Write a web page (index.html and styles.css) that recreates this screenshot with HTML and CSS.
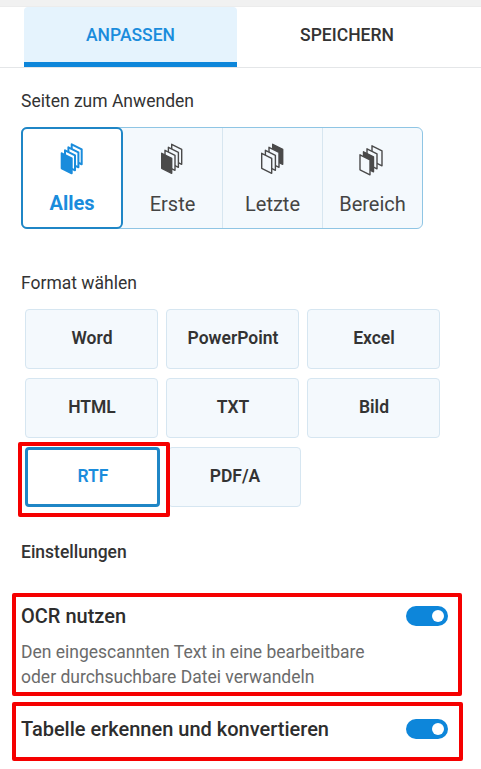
FILE: index.html
```html
<!DOCTYPE html>
<html lang="de">
<head>
    <meta charset="UTF-8">
    <meta name="viewport" content="width=device-width, initial-scale=1.0">
    <title>Anpassen</title>
    <link rel="stylesheet" href="styles.css">
</head>
<body>
    <div class="topstrip"></div>

    <div class="tabs">
        <div class="tab active">ANPASSEN</div>
        <div class="tab">SPEICHERN</div>
    </div>

    <div class="label pages-label">Seiten zum Anwenden</div>
    <div class="segments">
        <div class="segment active">
            <svg class="pages" viewBox="0 0 36 38" width="36" height="38">
                <path class="page-blue" transform="translate(11 -9)" d="M6.700 13.300l10 5v15l-10-5z"/>
                <path class="page-blue" transform="translate(7.700 -6)" d="M6.700 13.300l10 5v15l-10-5z"/>
                <path class="page-blue" transform="translate(4.300 -3)" d="M6.700 13.300l10 5v15l-10-5z"/>
                <path class="page-blue solid" transform="translate(1 0)" d="M6.700 13.300l10 5v15l-10-5z"/>
            </svg>
            <span>Alles</span>
        </div>
        <div class="segment">
            <svg class="pages" viewBox="0 0 36 38" width="36" height="38">
                <path class="page" transform="translate(10 -9)" d="M6.700 13.300l10 5v15l-10-5z"/>
                <path class="page" transform="translate(6.700 -6)" d="M6.700 13.300l10 5v15l-10-5z"/>
                <path class="page" transform="translate(3.300 -3)" d="M6.700 13.300l10 5v15l-10-5z"/>
                <path class="page solid" d="M6.700 13.300l10 5v15l-10-5z"/>
            </svg>
            <span>Erste</span>
        </div>
        <div class="segment">
            <svg class="pages" viewBox="0 0 36 38" width="36" height="38">
                <path class="page solid" transform="translate(11 -9)" d="M6.700 13.300l10 5v15l-10-5z"/>
                <path class="page" transform="translate(7.300 -6)" d="M6.700 13.300l10 5v15l-10-5z"/>
                <path class="page" transform="translate(3.700 -3)" d="M6.700 13.300l10 5v15l-10-5z"/>
                <path class="page" d="M6.700 13.300l10 5v15l-10-5z"/>
            </svg>
            <span>Letzte</span>
        </div>
        <div class="segment">
            <svg class="pages" viewBox="0 0 36 38" width="36" height="38">
                <path class="page" transform="translate(10.300 -7.500)" d="M6.700 13.300l10 5v15l-10-5z"/>
                <path class="page" transform="translate(5.300 -4.500)" d="M6.700 13.300l10 5v15l-10-5z"/>
                <path class="page solid" transform="translate(1.800 -1.500)" d="M6.700 13.300l10 5v15l-10-5z"/>
                <path class="page" transform="translate(-1.700 1.500)" d="M6.700 13.300l10 5v15l-10-5z"/>
            </svg>
            <span>Bereich</span>
        </div>
    </div>

    <div class="label format-label">Format wählen</div>
    <div class="formats">
        <div class="format">Word</div>
        <div class="format">PowerPoint</div>
        <div class="format">Excel</div>
        <div class="format">HTML</div>
        <div class="format">TXT</div>
        <div class="format">Bild</div>
        <div class="format active">RTF</div>
        <div class="format wide">PDF/A</div>
    </div>

    <div class="label settings-label">Einstellungen</div>

    <div class="option ocr">
        <div class="option-head">
            <span class="option-title">OCR nutzen</span>
            <span class="switch"></span>
        </div>
        <p class="option-text">Den eingescannten Text in eine bearbeitbare<br>oder durchsuchbare Datei verwandeln</p>
    </div>
    <div class="option table">
        <div class="option-head">
            <span class="option-title">Tabelle erkennen und konvertieren</span>
            <span class="switch"></span>
        </div>
    </div>

    <!-- rote Markierungen -->
    <div class="mark mark-rtf"></div>
    <div class="mark mark-ocr"></div>
    <div class="mark mark-table"></div>
</body>
</html>
```

FILE: styles.css
```css
html,
body {
    height: 100%;
}

body {
    font-family: Roboto, "Liberation Sans", sans-serif;
    margin: 0;
    padding: 0;
    position: relative;
    overflow: hidden;
    background-color: #fff;
    color: #333;
}

.topstrip {
    height: 6px;
    background-color: #f1f1f1;
    border-bottom: 1px solid #ececec;
}

.tabs {
    display: flex;
    height: 60px;
    padding-left: 24px;
    border-bottom: 1px solid #e4e6e8;
}

.tab {
    width: 220px;
    height: 55px;
    display: flex;
    align-items: center;
    justify-content: center;
    font-size: 17.5px;
    font-weight: 500;
    color: #333;
}

.tab.active {
    width: 213px;
    background-color: #e5f3fd;
    border-bottom: 5px solid #0d86da;
    border-radius: 4px 4px 0 0;
    color: #1a8cdc;
}

.label {
    font-size: 17.5px;
    line-height: 20px;
    padding-left: 21px;
    color: #333;
}

.pages-label {
    margin-top: 23px;
}

.segments {
    display: flex;
    width: 402px;
    height: 102px;
    margin: 16px 0 0 21px;
    box-sizing: border-box;
    background-color: #f4f9fd;
    border: 1px solid #8fc5e4;
    border-radius: 6px;
}

.segment {
    flex: 1;
    display: flex;
    flex-direction: column;
    align-items: center;
    border-left: 1px solid #d7e6f0;
    font-size: 20px;
    color: #444;
}

.segment .pages {
    margin-top: 12px;
}

.segment span {
    margin-top: 14px;
    line-height: 24px;
}

.segment.active {
    flex: none;
    width: 102px;
    height: 102px;
    margin: -1px 0 -1px -1px;
    box-sizing: border-box;
    background-color: #fff;
    border: 2px solid #1f86c6;
    border-radius: 6px;
    font-weight: 700;
    color: #1a8cdc;
}

.segment.active + .segment {
    border-left: 0;
}

.segment.active .pages {
    margin-top: 11px;
}

.segment.active span {
    margin-top: 13px;
}

.page {
    fill: #f4f9fd;
    stroke: #4a4a4a;
    stroke-width: 1.4;
    stroke-linejoin: round;
}

.page.solid {
    fill: #4a4a4a;
}

.page-blue {
    fill: #fff;
    stroke: #1a8cdc;
    stroke-width: 2;
    stroke-linejoin: round;
}

.page-blue.solid {
    fill: #1a8cdc;
}

.format-label {
    margin-top: 44px;
}

.formats {
    display: grid;
    grid-template-columns: repeat(3, 133px);
    grid-auto-rows: 60px;
    gap: 9px 8px;
    margin: 16px 0 0 25px;
}

.format {
    display: flex;
    align-items: center;
    justify-content: center;
    box-sizing: border-box;
    padding: 0 0 2px 1px;
    background-color: #f4f9fd;
    border: 1px solid #d6e6f1;
    border-radius: 4px;
    font-size: 17.5px;
    font-weight: 600;
    color: #333;
}

.format.active {
    width: 135px;
    background-color: #fff;
    border: 3px solid #1f86c6;
    color: #1a8cdc;
}

.format.wide {
    width: 133px;
    margin-left: 2px;
}

.settings-label {
    margin-top: 35px;
    font-weight: 500;
}

.option {
    padding: 0 33px 0 21px;
}

.ocr {
    margin-top: 42px;
}

.table {
    margin-top: 27px;
}

.option-head {
    display: flex;
    justify-content: space-between;
    align-items: center;
    height: 24px;
}

.option-title {
    font-size: 20px;
    font-weight: 500;
    color: #2d2d2d;
}

.switch {
    position: relative;
    width: 42px;
    height: 20px;
    border-radius: 10px;
    background-color: #0d86da;
}

.switch::after {
    content: "";
    position: absolute;
    right: 4px;
    top: 4px;
    width: 12px;
    height: 12px;
    border-radius: 50%;
    background-color: #fff;
}

.option-text {
    margin: 12px 0 0;
    font-size: 17.5px;
    line-height: 25px;
    color: #6b6b6b;
}

.mark {
    position: absolute;
    box-sizing: border-box;
    border: 4px solid #f50000;
    border-radius: 2px;
}

.mark-rtf {
    left: 18px;
    top: 442px;
    width: 152px;
    height: 75px;
}

.mark-ocr {
    left: 12px;
    top: 593px;
    width: 450px;
    height: 103px;
}

.mark-table {
    left: 12px;
    top: 702px;
    width: 451px;
    height: 59px;
}
```
